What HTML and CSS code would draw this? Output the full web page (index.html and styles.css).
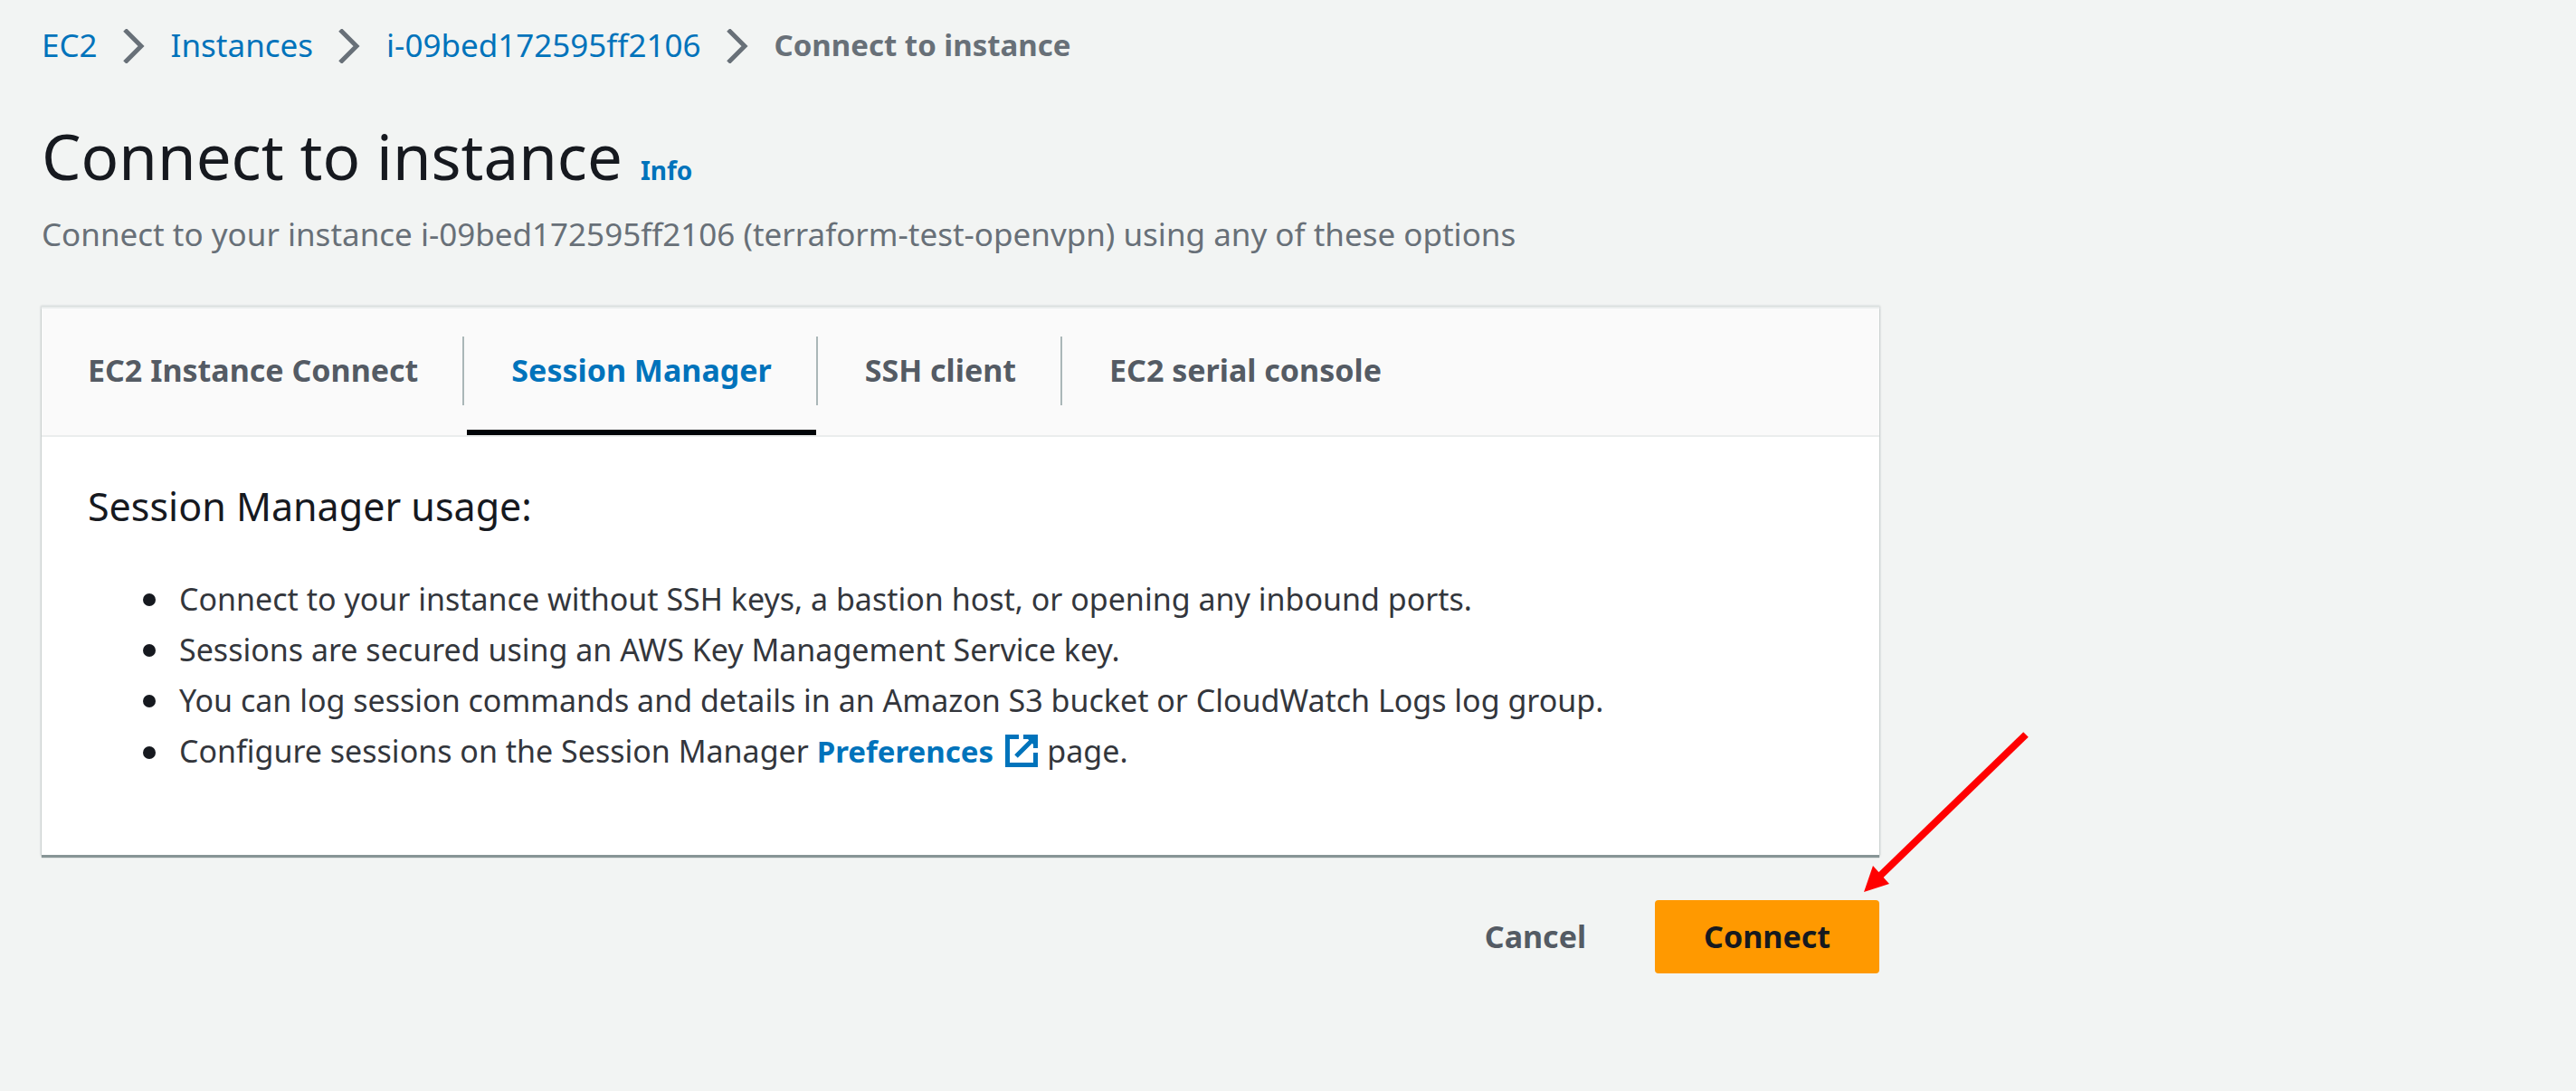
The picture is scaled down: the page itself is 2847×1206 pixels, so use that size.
FILE: index.html
```html
<!DOCTYPE html>
<html lang="en">
<head>
<meta charset="utf-8">
<meta name="viewport" content="width=device-width, initial-scale=1">
<title>Connect to instance | EC2</title>
<link rel="stylesheet" href="styles.css">
</head>
<body>
<main class="page">
  <nav aria-label="Breadcrumbs">
    <ol class="breadcrumbs">
      <li><a href="#ec2">EC2</a><svg class="chevron" viewBox="0 0 24 38" aria-hidden="true"><path d="M2 1 20 19 2 37"/></svg></li>
      <li><a href="#instances">Instances</a><svg class="chevron" viewBox="0 0 24 38" aria-hidden="true"><path d="M2 1 20 19 2 37"/></svg></li>
      <li><a href="#instance">i-09bed172595ff2106</a><svg class="chevron" viewBox="0 0 24 38" aria-hidden="true"><path d="M2 1 20 19 2 37"/></svg></li>
      <li class="current" aria-current="page">Connect to instance</li>
    </ol>
  </nav>

  <header class="page-header">
    <div class="title-row">
      <h1>Connect to instance</h1>
      <a class="info" href="#info">Info</a>
    </div>
    <p>Connect to your instance i-09bed172595ff2106 (terraform-test-openvpn) using any of these options</p>
  </header>

  <section class="card">
    <ul class="tabs" role="tablist">
      <li role="presentation"><button type="button" role="tab" aria-selected="false">EC2 Instance Connect</button></li>
      <li role="presentation"><button type="button" role="tab" aria-selected="true" aria-controls="session-manager">Session Manager</button></li>
      <li role="presentation"><button type="button" role="tab" aria-selected="false">SSH client</button></li>
      <li role="presentation"><button type="button" role="tab" aria-selected="false">EC2 serial console</button></li>
    </ul>
    <div class="panel" id="session-manager" role="tabpanel">
      <h2>Session Manager usage:</h2>
      <ul class="usage">
        <li><span>Connect to your instance without SSH keys, a bastion host, or opening any inbound ports.</span></li>
        <li><span>Sessions are secured using an AWS Key Management Service key.</span></li>
        <li><span>You can log session commands and details in an Amazon S3 bucket or CloudWatch Logs log group.</span></li>
        <li><span>Configure sessions on the Session Manager <a href="#preferences">Preferences <svg class="external" viewBox="0 0 36 36" aria-hidden="true"><path class="stroke" d="M15 2.5H2.5V33.500H33.500V20M20 2.500H33.500V15M12 24 32 4"/><path class="fill" d="M24 4H32V12Z"/></svg></a> page.</span></li>
      </ul>
    </div>
  </section>

  <div class="actions">
    <button type="button" class="button">Cancel</button>
    <button type="button" class="button primary">Connect</button>
    <svg class="pointer" viewBox="0 0 195 190" aria-hidden="true"><path class="shaft" d="M185 7 24 163"/><path class="head" d="M6 181 16 152 34 172Z"/></svg>
  </div>
</main>
</body>
</html>
```
FILE: styles.css
```css
* {
  box-sizing: border-box;
}

body {
  margin: 0;
  background: #f2f4f3;
  color: #16191f;
  font: 34px/56px "Noto Sans", "Open Sans", sans-serif;
}

h1, h2, p, ul, ol {
  margin: 0;
  padding: 0;
  font-weight: 400;
}

ul, ol {
  list-style: none;
}

a {
  color: #0073bb;
  text-decoration: none;
}

button {
  border: 0;
  background: none;
  font: inherit;
  font-weight: 700;
  cursor: pointer;
}

.page {
  max-width: 2123px;
  padding: 22px 46px 48px;
}

/* Breadcrumbs */
.breadcrumbs {
  display: flex;
  flex-wrap: wrap;
  font-size: 35px;
}

.breadcrumbs li {
  display: flex;
  align-items: center;
}

.breadcrumbs .current {
  color: #687078;
  font-size: 33px;
  font-weight: 700;
}

.chevron {
  width: 24px;
  height: 38px;
  margin: 2px 29px 0 28px;
  fill: none;
  stroke: #687078;
  stroke-width: 5px;
}

/* Page header */
.page-header {
  margin: 48px 0 52px;
}

.title-row {
  display: flex;
  align-items: baseline;
  gap: 20px;
  margin-bottom: 13px;
}

h1 {
  font-size: 69px;
  line-height: 92px;
}

.info {
  font-size: 28px;
  font-weight: 700;
}

.page-header p {
  color: #687078;
  font-size: 35px;
}

/* Tabbed card */
.card {
  background: #fff;
  border-top: 2px solid #eaeded;
  box-shadow: 0 3px 1px 0 #879596, 0 0 2px 1px #ced3d3;
}

.tabs {
  display: flex;
  height: 142px;
  padding-left: 2px;
  background: #fafafa;
  border-bottom: 2px solid #eaeded;
}

.tabs li {
  display: flex;
  align-items: center;
}

.tabs li:not(:last-child)::after {
  content: "";
  width: 2px;
  height: 76px;
  margin: 0 3px 2px 0;
  background: #aab7b8;
}

.tabs button {
  height: 100%;
  padding: 8px 49px 6px;
  border-bottom: 6px solid transparent;
  color: #545b64;
}

.tabs button[aria-selected="true"] {
  border-bottom-color: #000408;
  color: #0073bb;
}

.panel {
  padding: 47px 51px 86px;
}

h2 {
  margin-bottom: 44px;
  font-size: 43px;
  line-height: 60px;
}

.usage {
  padding-left: 61px;
}

.usage li {
  display: flex;
  align-items: baseline;
  gap: 26px;
}

.usage li::before {
  content: "";
  flex: none;
  width: 14px;
  height: 14px;
  margin-top: 2px;
  border-radius: 50%;
  background: #16191f;
  align-self: center;
}

.usage span {
  color: #33363c;
}

.usage a {
  font-size: 33px;
  font-weight: 700;
}

.external {
  width: 36px;
  height: 36px;
  margin: 0 2px 0 4px;
  vertical-align: -5px;
}

.external .stroke {
  fill: none;
  stroke: #0073bb;
  stroke-width: 5px;
}

.external .fill {
  fill: #0073bb;
}

/* Actions */
.actions {
  position: relative;
  display: flex;
  justify-content: flex-end;
  gap: 22px;
  margin-top: 50px;
}

.button {
  height: 81px;
  padding: 0 54px 2px;
  border-radius: 4px;
  color: #545b64;
}

.primary {
  background: #ff9900;
  color: #16191f;
}

.pointer {
  position: absolute;
  right: -172px;
  bottom: 100%;
  width: 195px;
  height: 190px;
}

.pointer .shaft {
  fill: none;
  stroke: #f00;
  stroke-width: 8px;
}

.pointer .head {
  fill: #f00;
}
```
